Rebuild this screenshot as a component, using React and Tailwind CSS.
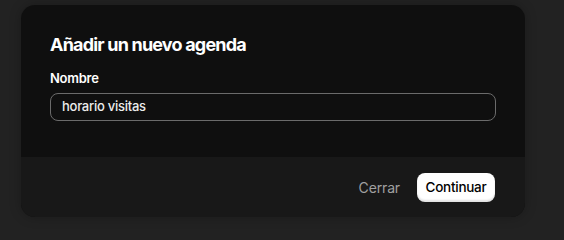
export default function App() {
  return (
    <div className="w-[564px] h-[240px] bg-[#222222] overflow-hidden" style={{ fontFamily: "Inter, 'Liberation Sans', sans-serif" }}>
      <div className="ml-[21px] mt-[5px] w-[504px] rounded-[14px] overflow-hidden bg-[#0f0f0f] shadow-[0_0_12px_rgba(0,0,0,0.25)]">
        <div className="px-[29px] pt-[29px] h-[152px]">
          <h2 className="text-[18px] leading-[22px] font-bold tracking-[-0.045em] text-white">Añadir un nuevo agenda</h2>
          <label className="block mt-[14px] text-[13px] leading-[16px] font-semibold text-white tracking-[-0.02em]">Nombre</label>
          <div className="mt-[7px] h-[28px] rounded-[8px] border border-[#6b6b6b] flex items-center px-[11px] text-[13px] text-[#ececec] font-medium tracking-[-0.02em]">
            horario visitas
          </div>
        </div>
        <div className="bg-[#181818] h-[60px] flex items-center justify-end pr-[30px] gap-[17px]">
          <span className="text-[14px] text-[#a0a0a0] tracking-[-0.01em]">Cerrar</span>
          <button className="h-[29px] w-[78px] rounded-[8px] bg-white text-black text-[13.5px] font-medium tracking-[-0.02em] shadow-[inset_0_-2px_2px_rgba(0,0,0,0.12)]">Continuar</button>
        </div>
      </div>
    </div>
  );
}
